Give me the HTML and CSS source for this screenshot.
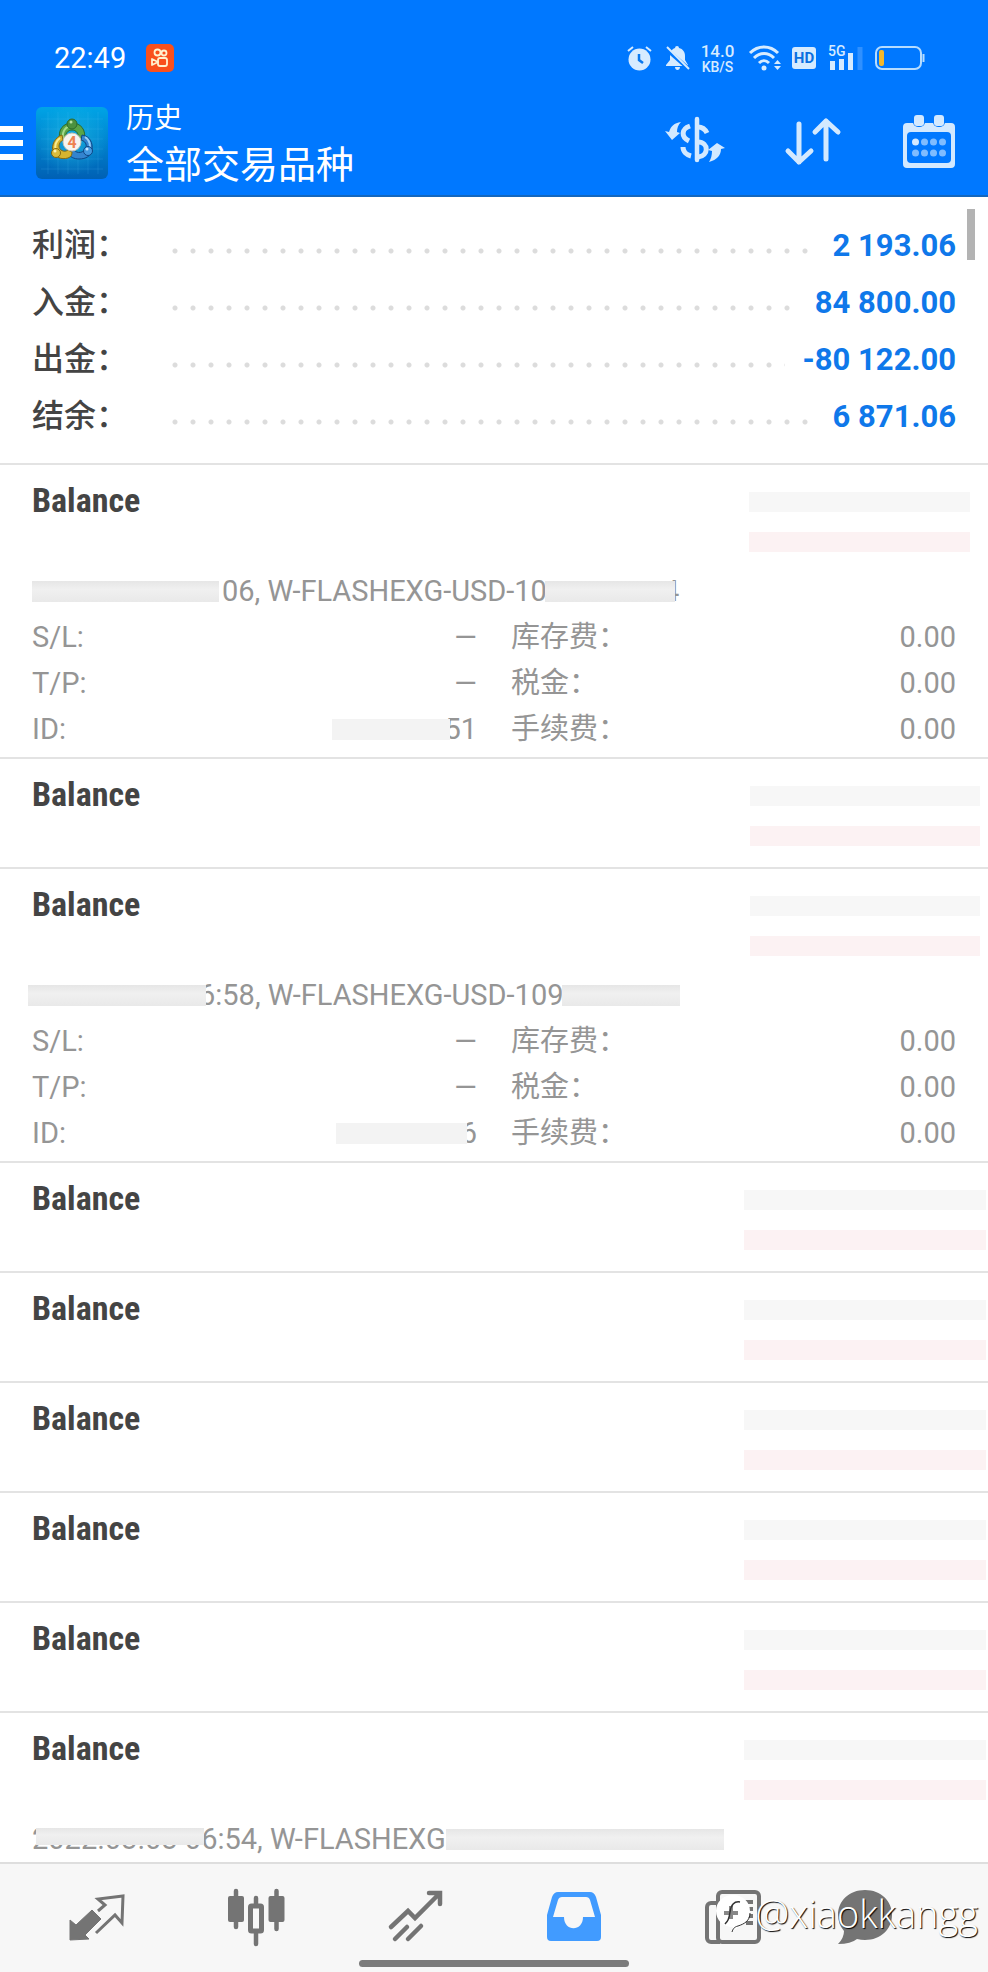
FILE: index.html
```html
<!DOCTYPE html>
<html lang="zh-CN">
<head>
  <meta charset="UTF-8">
  <meta name="viewport" content="width=device-width, initial-scale=1.0">
  <title>历史 - 全部交易品种</title>
  <link rel="stylesheet" href="styles.css">
</head>
<body>
  <header>
    <div class="status">
      <span class="time">22:49</span>
      <svg class="app" width="28" height="28" viewBox="0 0 28 28">
        <rect width="28" height="28" rx="5" fill="#f9501c"/>
        <g fill="none" stroke="#fff3d0" stroke-width="1.8">
          <circle cx="11.500" cy="8.500" r="3"/>
          <circle cx="18" cy="9" r="2.500"/>
          <rect x="12" y="14" width="9" height="8" rx="2"/>
          <path d="M12 18l-6-3v6z" stroke-linejoin="round"/>
        </g>
      </svg>
      <div class="tray">
        <!-- alarm -->
        <svg width="24" height="26" viewBox="0 0 24 26">
          <circle cx="12.500" cy="14.500" r="11" fill="#d6ebff"/>
          <path d="M1 6l5-4M24 6l-5-4" stroke="#d6ebff" stroke-width="2"/>
          <path d="M12 9v6l4 3" fill="none" stroke="#0a78ee" stroke-width="2.500"/>
        </svg>
        <!-- muted -->
        <svg width="25" height="26" viewBox="-2 0 25 26">
          <path d="M12 1a2 2 0 0 1 2 2c4 1 6 4 6 8v4l3 5v1H1v-1l4-5v-4c0-4 2-7 5-8a2 2 0 0 1 2-2zM10 22h5c0 4-5 4-5 0z" fill="#d6ebff"/>
          <path d="M0 3l25 22" stroke="#0078ff" stroke-width="4"/>
          <path d="M2 2l22 22" stroke="#d6ebff" stroke-width="2"/>
        </svg>
        <span class="speed"><b>14.0</b><i>KB/S</i></span>
        <!-- wifi -->
        <svg width="33" height="26" viewBox="-1 0 33 26">
          <g fill="none" stroke="#d6ebff" stroke-width="3">
            <path d="M2 8c8-8 20-8 28 0M6 13c6-6 14-6 20 0M11 18c3-3 7-3 10 0"/>
          </g>
          <circle cx="16" cy="23" r="2.500" fill="#d6ebff"/>
          <path d="M26 19l3.500-4 3.500 4zM26 21l3.500 4 3.500-4z" fill="#d6ebff"/>
        </svg>
        <span class="hd">HD</span>
        <!-- signal -->
        <svg width="35" height="26" viewBox="0 0 35 26">
          <text x="0" y="11" class="net">5G</text>
          <path d="M4.500 16v9M13.500 14v11M22.500 8v17" stroke="#d6ebff" stroke-width="5"/>
          <path d="M32 2v23" stroke="#2f90ff" stroke-width="5"/>
        </svg>
        <!-- battery -->
        <svg width="50" height="26" viewBox="0 0 50 26">
          <rect x="1" y="2" width="45" height="22" rx="6" fill="none" stroke="#b5dcff" stroke-width="2"/>
          <rect x="4" y="5" width="5" height="16" rx="2" fill="#f3b82a"/>
          <path d="M48.500 9v8" stroke="#b5dcff" stroke-width="2"/>
        </svg>
      </div>
    </div>

    <div class="toolbar">
      <button class="menu" aria-label="菜单">
        <svg width="23" height="34" viewBox="0 0 23 34"><path d="M0 3h23M0 17h23M0 31h23" stroke="#fff" stroke-width="6"/></svg>
      </button>
      <svg class="logo" width="72" height="72" viewBox="0 0 72 72">
        <defs>
          <linearGradient id="tile" x1="0" y1="0" x2="0" y2="1">
            <stop offset="0" stop-color="#00a4e6"/>
            <stop offset="1" stop-color="#0060b4"/>
          </linearGradient>
          <radialGradient id="glow" cx=".5" cy=".45" r=".5">
            <stop offset="0" stop-color="#2ccbe6" stop-opacity=".5"/>
            <stop offset="1" stop-color="#2ccbe6" stop-opacity="0"/>
          </radialGradient>
        </defs>
        <rect width="72" height="72" rx="6" fill="url(#tile)"/>
        <rect width="72" height="72" rx="6" fill="url(#glow)"/>
        <path d="M12 5v62M22 5v62M32 5v62M42 5v62M52 5v62M62 5v62M5 12h62M5 22h62M5 32h62M5 42h62M5 52h62M5 62h62" stroke="#5fd0ff" stroke-opacity=".15"/>
        <!-- green, blue and yellow figures round the badge -->
        <path d="M24 34c-3-12 4-18 12-18s15 6 12 18l-6-2c1-6-2-9-6-9s-7 3-6 9z" fill="#5aa548" stroke="#2b6a2b"/>
        <path d="M27 31c-1-7 3-12 9-12" fill="none" stroke="#a5d98a" stroke-width="2"/>
        <path d="M46 28c8 1 11 8 10 15-1 6-6 9-13 9-5 0-9-2-11-6l6-3c3 4 10 3 12-2 1-4-1-7-5-8z" fill="#3384cf" stroke="#0e4685"/>
        <path d="M49 30c5 3 6 9 4 14" fill="none" stroke="#9bd0f7" stroke-width="2"/>
        <path d="M26 28c-7 2-11 10-9 17 2 5 8 8 15 6 3-1 4-3 4-6l-4-2c-4 3-9 0-9-4 0-3 2-5 4-6z" fill="#d5b52f" stroke="#826913"/>
        <path d="M24 31c-4 3-6 8-4 12" fill="none" stroke="#f6eb92" stroke-width="2"/>
        <circle cx="36" cy="17" r="5" fill="#4b9140" stroke="#2c6a2c"/>
        <circle cx="20" cy="46" r="4.500" fill="#d9bd3d" stroke="#826913"/>
        <circle cx="52" cy="44" r="4.500" fill="#4298e0" stroke="#0e4685"/>
        <circle cx="35" cy="15" r="1.500" fill="#b9e2a4"/>
        <circle cx="19" cy="44" r="1.500" fill="#fbf3b5"/>
        <circle cx="51" cy="42" r="1.500" fill="#c4e5ff"/>
        <circle cx="36" cy="35" r="9" fill="#f6f4ef" stroke="#c9c3b2"/>
        <text x="36" y="41" class="four">4</text>
      </svg>
      <h1><small>历史</small>全部交易品种</h1>
      <div class="tools">
        <button aria-label="交易品种">
          <svg width="60" height="54" viewBox="0 0 60 54" fill="none" stroke="#d3e9ff" stroke-width="5">
            <path d="M32 3v41" stroke-width="4.500" stroke-linecap="round"/>
            <path d="M25 10c-9 3-9 11-1 15M18 31c0 5 4 8 8 9M33 11c4 0 7 2 9 6M33 26c11 0 11 14 0 15"/>
            <path d="M0 15l4 1C6 10 9 7 16 6c-3 3-4 6-4 10l3 1-8 7zM60 32l-4 1c0 6-4 11-12 13 2-3 3-7 3-11l-4-1 9-7z" fill="#d3e9ff" stroke="none"/>
          </svg>
        </button>
        <button aria-label="排序">
          <svg width="56" height="54" viewBox="1 1 56 54" fill="none" stroke="#d3e9ff" stroke-width="5" stroke-linecap="round" stroke-linejoin="round">
            <path d="M14 9v38M3 36l11 11 12-11M41 44V6M30 17L41 6l12 11"/>
          </svg>
        </button>
        <button aria-label="日期">
          <svg width="52" height="54" viewBox="0 2 52 54">
            <path d="M4 9h44a4 4 0 0 1 4 4v37a4 4 0 0 1-4 4H4a4 4 0 0 1-4-4V13a4 4 0 0 1 4-4zM8 18a4 4 0 0 0-4 4v23a4 4 0 0 0 4 4h36a4 4 0 0 0 4-4V22a4 4 0 0 0-4-4z" fill="#d3e9ff" fill-rule="evenodd"/>
            <rect x="10" y="-1" width="12" height="14" rx="5" fill="#0078ff"/>
            <rect x="30" y="-1" width="12" height="14" rx="5" fill="#0078ff"/>
            <rect x="11" y="1" width="10" height="11" rx="3" fill="#d3e9ff"/>
            <rect x="31" y="1" width="10" height="11" rx="3" fill="#d3e9ff"/>
            <circle cx="12.500" cy="28" r="3.500" fill="#d3e9ff"/>
            <g fill="#7fbcff">
              <circle cx="21.500" cy="28" r="3.500"/><circle cx="30.500" cy="28" r="3.500"/><circle cx="39.500" cy="28" r="3.500"/>
              <circle cx="12.500" cy="39" r="3.500"/><circle cx="21.500" cy="39" r="3.500"/><circle cx="30.500" cy="39" r="3.500"/><circle cx="39.500" cy="39" r="3.500"/>
            </g>
          </svg>
        </button>
      </div>
    </div>
  </header>

  <main>
    <dl class="summary">
      <div><dt>利润：</dt><dd>2 193.06</dd></div>
      <div><dt>入金：</dt><dd>84 800.00</dd></div>
      <div><dt>出金：</dt><dd>-80 122.00</dd></div>
      <div><dt>结余：</dt><dd>6 871.06</dd></div>
    </dl>

    <ul class="deals">
      <li>
        <div class="head narrow"><h2>Balance</h2><div class="amount"></div></div>
        <p class="comment"><span class="mask date"></span>06, W-FLASHEXG-USD-10<span class="mask account cut"></span>4</p>
        <dl class="detail">
          <div><dt>S/L:</dt><dd>—</dd></div>
          <div><dt>库存费：</dt><dd>0.00</dd></div>
          <div><dt>T/P:</dt><dd>—</dd></div>
          <div><dt>税金：</dt><dd>0.00</dd></div>
          <div><dt>ID:</dt><dd><span class="mask id"></span>51</dd></div>
          <div><dt>手续费：</dt><dd>0.00</dd></div>
        </dl>
      </li>
      <li>
        <div class="head medium"><h2>Balance</h2><div class="amount"></div></div>
      </li>
      <li>
        <div class="head medium"><h2>Balance</h2><div class="amount"></div></div>
        <p class="comment"><span class="mask date out"></span>6:58, W-FLASHEXG-USD-109<span class="mask account"></span></p>
        <dl class="detail">
          <div><dt>S/L:</dt><dd>—</dd></div>
          <div><dt>库存费：</dt><dd>0.00</dd></div>
          <div><dt>T/P:</dt><dd>—</dd></div>
          <div><dt>税金：</dt><dd>0.00</dd></div>
          <div><dt>ID:</dt><dd><span class="mask id wide"></span>6</dd></div>
          <div><dt>手续费：</dt><dd>0.00</dd></div>
        </dl>
      </li>
      <li>
        <div class="head"><h2>Balance</h2><div class="amount"></div></div>
      </li>
      <li>
        <div class="head"><h2>Balance</h2><div class="amount"></div></div>
      </li>
      <li>
        <div class="head"><h2>Balance</h2><div class="amount"></div></div>
      </li>
      <li>
        <div class="head"><h2>Balance</h2><div class="amount"></div></div>
      </li>
      <li>
        <div class="head"><h2>Balance</h2><div class="amount"></div></div>
      </li>
      <li>
        <div class="head"><h2>Balance</h2><div class="amount"></div></div>
        <p class="comment"><span class="mask strip"></span>2022.03.03 06:54, W-FLASHEXG<span class="mask long"></span></p>
      </li>
    </ul>
    <div class="thumb"></div>
  </main>

  <nav>
    <a href="#quotes" aria-label="行情">
      <svg width="56" height="56" viewBox="0 0 56 56">
        <path d="M1 31l6 5 16-15 9 9-16 16 4 4-19 1z" fill="#747474" stroke="#747474" stroke-linejoin="round"/>
        <path d="M27 44l19-18 7 8 1-27-25 3 7 6-7 6" fill="none" stroke="#747474" stroke-width="3"/>
      </svg>
    </a>
    <a href="#chart" aria-label="图表">
      <svg width="58" height="56" viewBox="0 0 58 56">
        <path d="M9 2v36M49.500 2v38M29 9v46" stroke="#747474" stroke-width="4.500" stroke-linecap="round"/>
        <rect x="1" y="7" width="16" height="26" rx="2" fill="#747474"/>
        <rect x="41.500" y="7" width="16" height="26" rx="2" fill="#747474"/>
        <rect x="23.500" y="17" width="11" height="25" rx="1" fill="#f7f7f7" stroke="#747474" stroke-width="5"/>
      </svg>
    </a>
    <a href="#trade" aria-label="交易">
      <svg width="56" height="56" viewBox="0 0 56 56" fill="none" stroke="#747474" stroke-width="4.500" stroke-linecap="round">
        <path d="M4 38l17-16 7 7L52 5M42 4h11v11M8 50l12-12M21 50l13-13"/>
      </svg>
    </a>
    <a href="#history" aria-label="历史">
      <svg width="56" height="56" viewBox="0 0 56 56">
        <path d="M12 3h32q4 0 6 5l5 18v22a4 4 0 0 1-4 4H5a4 4 0 0 1-4-4V26L6 8q2-5 6-5zM16 8q-3 0-4 3L7 28h11c0 15 19 15 19 0h12L44 11q-1-3-4-3z" fill="#419bff" fill-rule="evenodd"/>
      </svg>
    </a>
    <a href="#news" aria-label="新闻">
      <svg width="58" height="56" viewBox="0 0 58 56" fill="none" stroke="#747474" stroke-width="4">
        <path d="M14 14H7a4 4 0 0 0-4 4v31a4 4 0 0 0 4 4h9"/>
        <rect x="14" y="3" width="41" height="50" rx="4"/>
        <path d="M38 13h11M42 20h7M42 27h7M42 34h7"/>
      </svg>
    </a>
    <a href="#chat" aria-label="聊天">
      <svg width="56" height="56" viewBox="0 0 56 56">
        <path d="M28 1c16 0 27 11 27 25S44 51 28 51q-4 0-8-1Q14 55 1 55q6-6 6-13Q1 35 1 26C1 12 12 1 28 1z" fill="#747474"/>
      </svg>
    </a>
    <div class="watermark">
      <svg width="38" height="40" viewBox="0 0 38 40">
        <path d="M19 2c10 0 17 7 17 16 0 10-8 14-17 20v-4C9 34 2 27 2 18S9 2 19 2z" fill="#fff"/>
        <path d="M36 20c0 8-6 11-12 13-4 1-5 3-6 6" fill="none" stroke="#333"/>
        <path d="M10 20h14M17 13v13" fill="none" stroke="#888" stroke-width="4"/>
        <path d="M26 9c-6-1-9 3-10 10s-2 9-5 12" fill="none" stroke="#333" stroke-width="1.500"/>
      </svg>
      <span>@xiaokkangg</span>
    </div>
    <div class="home"></div>
  </nav>
</body>
</html>
```
FILE: styles.css
```css
* {margin:0; padding:0; box-sizing:border-box;}
body {min-height:100vh; display:flex; flex-direction:column; background:#fff; color:#444; font-family:Roboto, "Noto Sans CJK SC", sans-serif;}
svg {display:block; flex:none; overflow:visible;}
button {border:0 none; background:none; cursor:pointer;}
ul {list-style:none;}

header {background:#0078ff; color:#fff; border-bottom:2px solid #1467bd;}
.status {display:flex; align-items:center; height:92px; padding:24px 63px 0 54px;}
.status .time {font-size:29px; line-height:32px;}
.status .app {margin-left:20px;}
.tray {display:flex; align-items:center; gap:12px; margin-left:auto; color:#d6ebff;}
.speed {width:35px; text-align:center;}
.speed b, .speed i {display:block; font-style:normal; font-weight:500;}
.speed b {font-size:17px; line-height:17px;}
.speed i {font-size:14px; line-height:14px;}
.hd {width:24px; height:22px; border-radius:3px; background:#d6ebff; color:#0a6fe0; font-size:15px; font-weight:700; line-height:22px; text-align:center;}
.net {font-size:14px; font-weight:500; fill:#d6ebff;}

.toolbar {display:flex; align-items:center; height:103px; padding:0 33px 2px 0;}
.toolbar .logo {margin:0 18px 0 13px;}
.four {font-size:16px; font-weight:700; text-anchor:middle; fill:#ee8250;}
h1 {font-size:38px; font-weight:400; line-height:48px;}
h1 small {display:block; font-size:28px; line-height:44px;}
.tools {display:flex; gap:61px; margin-left:auto;}

main {position:relative; flex:1;}
.summary {padding:20px 32px 18px; border-bottom:2px solid #e3e3e3; font-size:32px; font-weight:500; line-height:57px;}
.summary div {display:flex;}
.summary dt {width:134px;}
.summary dd {flex:1; display:flex; color:#0f78ea; font-size:31px; font-weight:700; white-space:nowrap;}
.summary dd:before {content:''; flex:1; margin-right:18px; background:radial-gradient(circle at 9px 34px, #dcdcdc 2px, transparent 3px) 0 0 / 18px 57px repeat-x;}
.thumb {position:absolute; top:12px; right:13px; width:8px; height:51px; background:#b3b3b3;}

.deals li {padding-bottom:5px; border-bottom:2px solid #e3e3e3;}
.deals li:last-child {padding-bottom:0; border-bottom:0 none;}
.head {display:flex; justify-content:space-between; height:103px; padding:0 2px 0 32px;}
.head.narrow {padding-right:18px;}
.head.medium {padding-right:8px;}
h2 {font-family:"Roboto Condensed", "Liberation Sans Narrow", Roboto, sans-serif; font-size:34px; font-weight:700; line-height:71px;}
.amount {width:242px; height:60px; margin-top:27px; background:linear-gradient(#f7f7f7 20px, #fff 20px, #fff 40px, #fcf2f3 40px);}
.medium .amount {width:230px;}
.narrow .amount {width:221px;}

.comment, .detail {padding:0 32px; color:#959595; font-size:29px; line-height:46px;}
.comment {position:relative; display:flex; align-items:center; height:46px; white-space:nowrap;}
.detail {display:grid; grid-template-columns:1fr 1fr; column-gap:34px;}
.detail div {display:flex; justify-content:space-between;}
.detail dd {display:flex; align-items:center;}

/* blurred-out private data */
.mask {position:relative; z-index:1; flex:none; height:21px; background:linear-gradient(#e6e6e6, #f0f0f0 40%, #e9e9e9);}
.mask.date {width:187px; margin-right:3px;}
.mask.date.out {width:178px; margin:0 -7px 0 -4px;}
.mask.account {width:118px; margin-left:-2px;}
.mask.cut {width:130px; margin:0 -12px 0 -2px;}
.mask.id {width:118px; margin-right:-6px; background:#f3f3f3;}
.mask.id.wide {width:131px;}
.mask.strip {position:absolute; top:12px; left:36px; width:168px; height:17px;}
.mask.long {width:278px;}

nav {position:relative; display:flex; align-items:center; height:110px; padding:0 69px 3px 18px; border-top:2px solid #dedede; background:#f7f7f7;}
nav a {flex:1; display:flex; justify-content:center;}
nav a:nth-of-type(6) {flex:0 0 107px;}
.home {position:absolute; bottom:5px; left:50%; width:270px; height:7px; margin-left:-135px; border-radius:4px; background:#7b7b7b;}
.watermark {position:absolute; top:23px; right:10px; display:flex; align-items:center; gap:4px; color:#fff; font-family:"Open Sans", "Noto Sans", sans-serif; font-size:38px; font-weight:300; line-height:52px; text-shadow:1px 1px 1px #000;}
```
